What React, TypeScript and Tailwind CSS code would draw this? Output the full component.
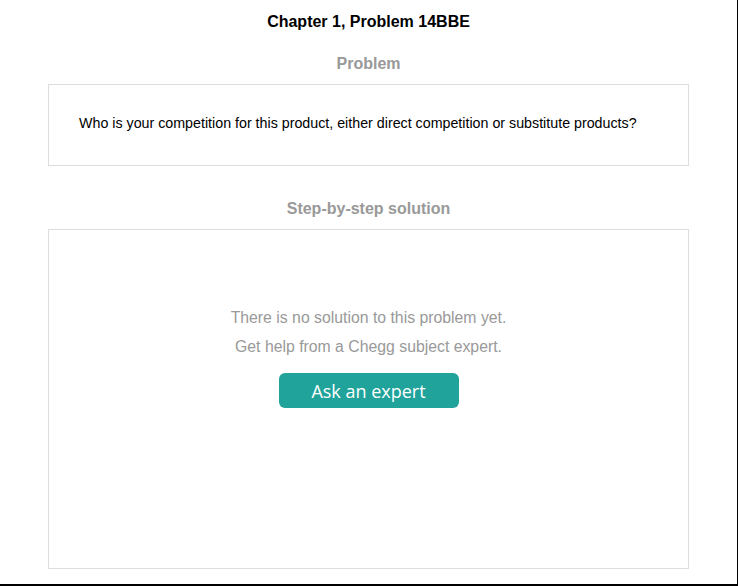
export default function App() {
  return (
    <div className="w-[738px] h-[586px] bg-white border-r border-b-2 border-black font-['Liberation_Sans',Arial,sans-serif] box-border">
      <div className="w-[737px] flex flex-col items-center pt-[12px]">
        <h1 className="text-[16px] leading-[20px] font-bold text-black">Chapter 1, Problem 14BBE</h1>
        <h2 className="mt-[22px] text-[16px] leading-[20px] font-bold text-[#999999]">Problem</h2>
        <div className="mt-[10px] w-[641px] h-[82px] border border-[#dddddd] flex items-start pt-[28px] px-[30px]">
          <p className="text-[14.25px] leading-[20px] text-black whitespace-nowrap">
            Who is your competition for this product, either direct competition or substitute products?
          </p>
        </div>
        <h2 className="mt-[33px] text-[16px] leading-[20px] font-bold text-[#999999]">Step-by-step solution</h2>
        <div className="mt-[10px] w-[641px] h-[340px] border border-[#dddddd] flex flex-col items-center pt-[78px]">
          <p className="text-[15.8px] leading-[20px] text-[#999999]">There is no solution to this problem yet.</p>
          <p className="mt-[9px] text-[15.8px] leading-[20px] text-[#999999]">Get help from a Chegg subject expert.</p>
          <button className="mt-[16px] w-[180px] h-[35px] pt-[2px] rounded-[6px] bg-[#20a39a] text-white text-[18px] font-['Open_Sans',sans-serif] flex items-center justify-center">
            Ask an expert
          </button>
        </div>
      </div>
    </div>
  );
}
